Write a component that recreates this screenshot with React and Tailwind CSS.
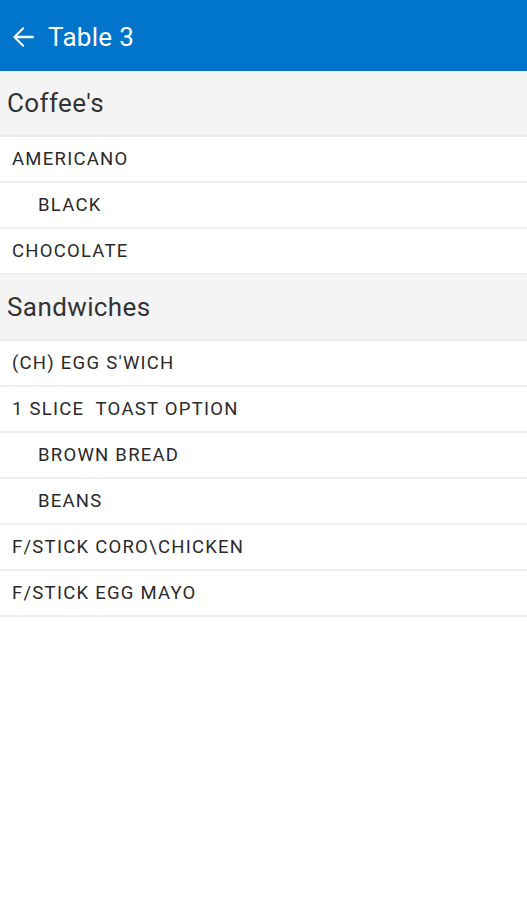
import React from "react";

const sections = [
  {
    title: "Coffee's",
    items: [
      { name: "AMERICANO" },
      { name: "BLACK", sub: true },
      { name: "CHOCOLATE" },
    ],
  },
  {
    title: "Sandwiches",
    items: [
      { name: "(CH) EGG S'WICH" },
      { name: "1 SLICE  TOAST OPTION" },
      { name: "BROWN BREAD", sub: true },
      { name: "BEANS", sub: true },
      { name: "F/STICK CORO\\CHICKEN" },
      { name: "F/STICK EGG MAYO" },
    ],
  },
];

export default function App() {
  return (
    <div className="w-[527px] h-[900px] bg-white font-['Roboto',sans-serif]">
      <div className="h-[71px] bg-[#0174cb] flex items-center pl-[7px] pt-[2px]">
        <svg width="32" height="32" viewBox="0 0 24 24" className="text-white">
          <path d="M20 11.1H7.6l5.5-5.5L12 4.5l-7.5 7.5 7.5 7.5 1.1-1.1-5.5-5.5H20v-1.8z" fill="currentColor" />
        </svg>
        <span className="ml-[9px] text-white text-[26px] tracking-[0.3px] leading-none whitespace-pre">Table 3</span>
      </div>
      {sections.map((s) => (
        <div key={s.title}>
          <div className="h-[66px] bg-[#f4f4f4] border-b-2 border-[#ebebeb] flex items-center pl-[7px] text-[26px] tracking-[0.4px] text-[#333]">
            {s.title}
          </div>
          {s.items.map((it, i) => (
            <div
              key={i}
              className={`h-[46px] border-b-2 border-[#eeeeee] flex items-center pt-[2px] text-[18.5px] tracking-[1.25px] text-[#2a2a2a] whitespace-pre ${it.sub ? "pl-[38px]" : "pl-[12px]"}`}
            >
              {it.name}
            </div>
          ))}
        </div>
      ))}
    </div>
  );
}
